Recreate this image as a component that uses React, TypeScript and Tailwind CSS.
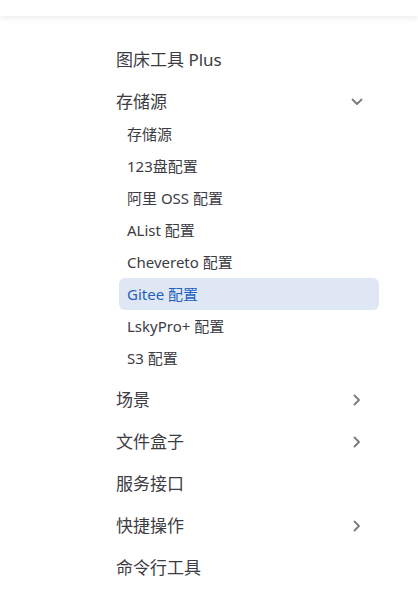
const subItems = [
  "存储源",
  "123盘配置",
  "阿里 OSS 配置",
  "AList 配置",
  "Chevereto 配置",
  "Gitee 配置",
  "LskyPro+ 配置",
  "S3 配置",
];

type Top = { text: string; arrow?: "down" | "right" };

const bottomItems: Top[] = [
  { text: "场景", arrow: "right" },
  { text: "文件盒子", arrow: "right" },
  { text: "服务接口" },
  { text: "快捷操作", arrow: "right" },
  { text: "命令行工具" },
];

function Chevron({ dir }: { dir: "down" | "right" }) {
  return (
    <svg width="14" height="14" viewBox="0 0 14 14" fill="none" className="text-[#7a7a7a]">
      {dir === "down" ? (
        <path d="M2.5 4.5 7 9l4.5-4.5" stroke="currentColor" strokeWidth="1.8" strokeLinecap="round" strokeLinejoin="round" />
      ) : (
        <path d="M4.5 2.5 9 7l-4.5 4.5" stroke="currentColor" strokeWidth="1.8" strokeLinecap="round" strokeLinejoin="round" />
      )}
    </svg>
  );
}

function TopRow({ text, arrow }: Top) {
  return (
    <div className="flex h-[42px] items-center justify-between pr-[15px] text-[17px] text-[#3c3c43]">
      <span>{text}</span>
      {arrow && <Chevron dir={arrow} />}
    </div>
  );
}

export default function App() {
  return (
    <div
      className="min-h-[605px] bg-white"
      style={{ fontFamily: '"Noto Sans", "Noto Sans CJK SC", sans-serif' }}
    >
      <div className="h-4 bg-white shadow-[0_2px_6px_rgba(0,0,0,0.08)]" />
      <nav className="pl-[116px] pr-[39px] pt-[23px]">
        <TopRow text="图床工具 Plus" />
        <TopRow text="存储源" arrow="down" />
        <ul className="-mt-[5px] mb-[5px] ml-[3px]">
          {subItems.map((item) => {
            const active = item === "Gitee 配置";
            return (
              <li
                key={item}
                className={
                  active
                    ? "flex h-8 items-center rounded-md bg-[#dfe7f4] px-2 text-[15px] text-[#1e5fc0]"
                    : "flex h-8 items-center px-2 text-[15px] text-[#3c3c43]"
                }
              >
                {item}
              </li>
            );
          })}
        </ul>
        {bottomItems.map((item) => (
          <TopRow key={item.text} text={item.text} arrow={item.arrow} />
        ))}
      </nav>
    </div>
  );
}
